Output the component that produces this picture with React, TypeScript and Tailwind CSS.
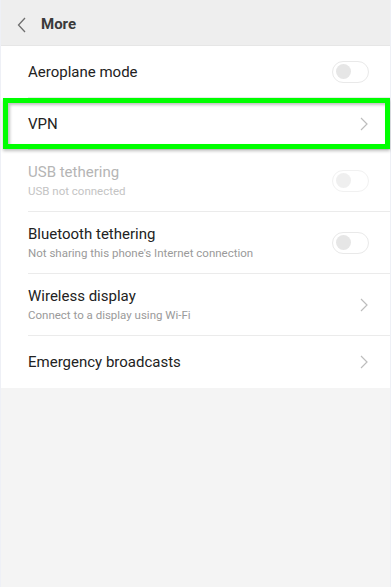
import { ReactNode } from 'react';

function Toggle({ dim }: { dim?: boolean }) {
  return (
    <div
      className={`w-[37px] h-[22px] rounded-full border border-[#e9e9e9] bg-white flex items-center px-[3px] ${
        dim ? 'opacity-60' : ''
      }`}
    >
      <div className="w-[15px] h-[15px] rounded-full bg-[#e6e6e6]" />
    </div>
  );
}

function Chevron() {
  return (
    <svg width="8" height="14" viewBox="0 0 8 14" className="mr-[1px]">
      <path d="M1 1l6 6-6 6" fill="none" stroke="#bdbdbd" strokeWidth="1.2" />
    </svg>
  );
}

interface RowProps {
  title: string;
  sub?: string;
  right: ReactNode;
  disabled?: boolean;
  last?: boolean;
  children?: ReactNode;
}

function Row({ title, sub, right, disabled, last, children }: RowProps) {
  return (
    <div className={`relative pl-[27px] ${sub ? 'h-[62px]' : 'h-[52px]'}`}>
      <div
        className={`h-full flex items-center justify-between pr-[21px] ${
          last ? '' : 'border-b border-[#ebebeb]'
        }`}
      >
        <div className="flex flex-col pt-[1px]">
          <span
            className={`text-[15px] leading-[19px] ${disabled ? 'text-[#b5b5b5]' : 'text-[#222222]'}`}
          >
            {title}
          </span>
          {sub && (
            <span
              className={`text-[11.5px] leading-[15px] mt-[2px] ${
                disabled ? 'text-[#c4c4c4]' : 'text-[#9a9a9a]'
              }`}
            >
              {sub}
            </span>
          )}
        </div>
        {right}
      </div>
      {children}
    </div>
  );
}

export default function App() {
  return (
    <div
      className="w-[391px] h-[587px] bg-[#f4f4f4] border-x border-[#eef0f6] flex flex-col"
      style={{ fontFamily: 'Roboto, "Noto Sans", sans-serif' }}
    >
      <header className="h-[46px] bg-[#eeeeee] flex items-center pl-[16px] pt-[4px] border-b border-[#e6e6e6]">
        <svg width="10" height="16" viewBox="0 0 10 16">
          <path d="M8 1L1.5 8 8 15" fill="none" stroke="#6e6e6e" strokeWidth="1.3" />
        </svg>
        <span className="ml-[14px] text-[15px] font-bold text-[#3a3a3a]">More</span>
      </header>

      <div className="bg-white">
        <Row title="Aeroplane mode" right={<Toggle />} />
        <Row title="VPN" right={<Chevron />}>
          <div className="absolute left-[2px] right-0 top-0 bottom-[1px] border-[5px] border-[#00ff00] shadow-[inset_2px_2px_3px_rgba(0,0,0,0.25),0_2px_3px_rgba(0,0,0,0.25)]" />
        </Row>
        <Row title="USB tethering" sub="USB not connected" right={<Toggle dim />} disabled />
        <Row
          title="Bluetooth tethering"
          sub="Not sharing this phone's Internet connection"
          right={<Toggle />}
        />
        <Row title="Wireless display" sub="Connect to a display using Wi-Fi" right={<Chevron />} />
        <Row title="Emergency broadcasts" right={<Chevron />} last />
      </div>
    </div>
  );
}
